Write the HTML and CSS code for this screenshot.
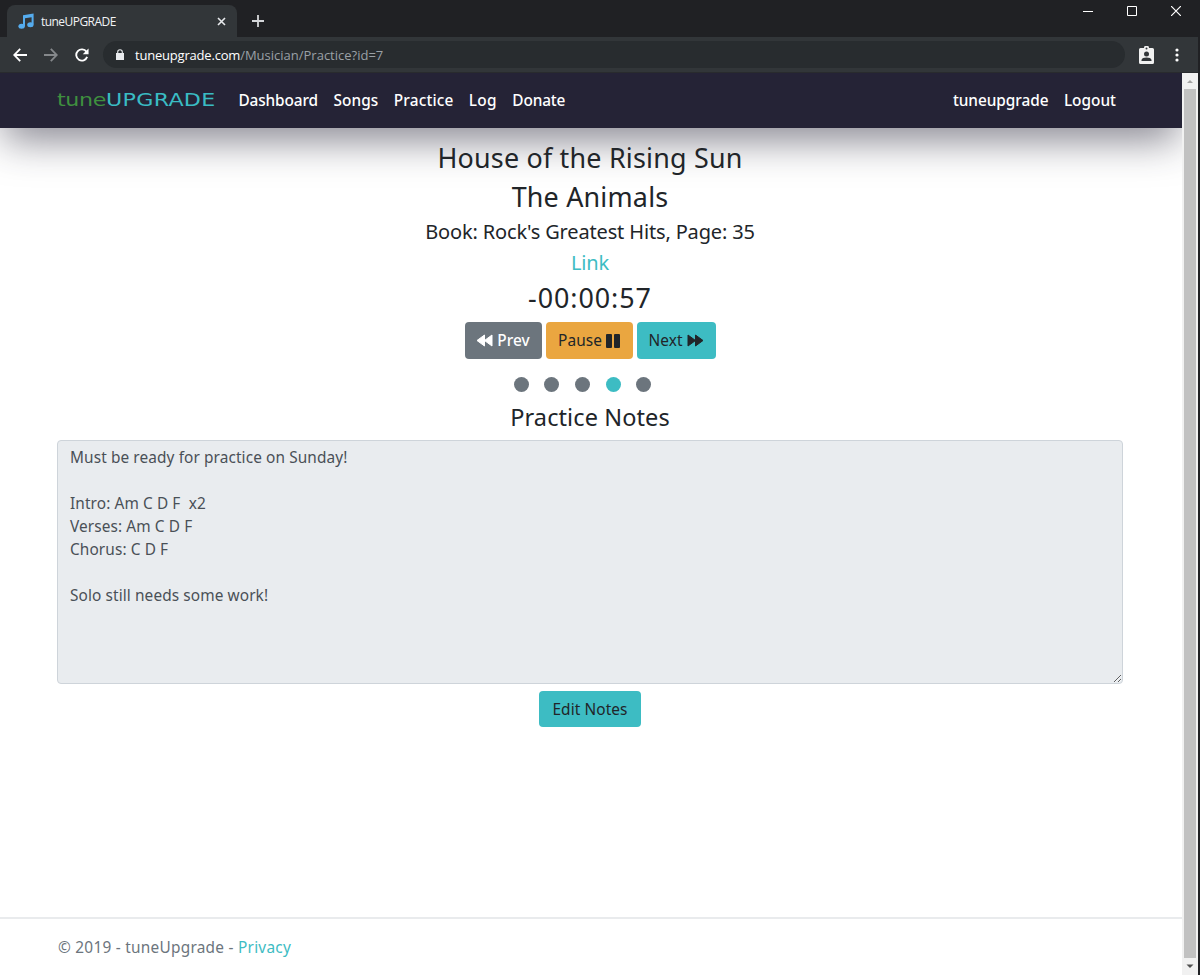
FILE: index.html
```html
<!DOCTYPE html>
<html lang="en">
<head>
  <meta charset="UTF-8">
  <title>tuneUPGRADE</title>
  <link rel="stylesheet" href="styles.css">
</head>
<body>
  <div class="tabstrip">
    <div class="tab">
      <svg class="tab-icon" width="16" height="16" viewBox="0 0 16 16" fill="#55acee"><path d="M5 2.2 15.6.4v11.2h-2V4.2L7 5.3v7.9H5z"/><ellipse cx="3.6" cy="13.2" rx="3.2" ry="2.5"/><ellipse cx="12.4" cy="11.8" rx="3.2" ry="2.5"/></svg>
      <span class="tab-title">tuneUPGRADE</span>
      <svg class="tab-close" width="9" height="9" viewBox="0 0 9 9" stroke="#e8eaed" stroke-width="1.6"><path d="M1 1l7 7M8 1l-7 7"/></svg>
    </div>
    <svg class="new-tab" width="12" height="12" viewBox="0 0 12 12" stroke="#d5d7da" stroke-width="1.8"><path d="M6 0v12M0 6h12"/></svg>
    <div class="window-buttons">
      <svg width="10" height="10" viewBox="0 0 10 10" stroke="#fff"><path d="M0 5.5h10"/></svg>
      <svg width="10" height="10" viewBox="0 0 10 10" stroke="#fff" fill="none"><path d="M.5.5h9v9h-9z"/></svg>
      <svg width="10" height="10" viewBox="0 0 10 10" stroke="#fff" stroke-width="1.2"><path d="M0 0l10 10M10 0L0 10"/></svg>
    </div>
  </div>
  <div class="toolbar">
    <svg width="14" height="14" viewBox="0 0 14 14" fill="none" stroke="#fff" stroke-width="1.8"><path d="M14 7H1.5M7.2.8 1.2 7l6 6.2"/></svg>
    <svg width="14" height="14" viewBox="0 0 14 14" fill="none" stroke="#85888b" stroke-width="1.8"><path d="M0 7h12.5M6.8.8l6 6.2-6 6.2"/></svg>
    <svg width="14" height="14" viewBox="0 0 15 14"><path d="M12.3 3.6A6 6 0 1 0 13 9" fill="none" stroke="#fff" stroke-width="2"/><path d="M14.5 0v6.2H8.3z" fill="#fff"/></svg>
    <div class="address">
      <svg width="8" height="11" viewBox="0 0 8 11"><path d="M0 4h8v7H0z" fill="#e8eaed"/><path d="M1.7 4.5V3a2.3 2.3 0 0 1 4.6 0v1.5" fill="none" stroke="#e8eaed" stroke-width="1.1"/></svg>
      <span class="url"><span class="url-host">tuneupgrade.com</span><span class="url-path">/Musician/Practice?id=7</span></span>
    </div>
    <svg class="profile" width="15" height="18" viewBox="0 0 15 18"><path d="M1.5 2H5a2.5 2.5 0 0 1 5 0h3.5q1.5 0 1.5 1.5v13q0 1.5-1.5 1.5h-12Q0 18 0 16.500v-13Q0 2 1.500 2z" fill="#f1f1f1"/><circle cx="7.5" cy="2.5" r="1" fill="#323639"/><circle cx="7.5" cy="8" r="2.5" fill="#323639"/><path d="M2.5 15v-1c0-3.300 10-3.300 10 0v1z" fill="#323639"/></svg>
    <svg class="menu" width="4" height="14" viewBox="0 0 4 14" fill="#fff"><circle cx="2" cy="2" r="1.6"/><circle cx="2" cy="7" r="1.6"/><circle cx="2" cy="12" r="1.6"/></svg>
  </div>

  <div class="window">
    <div class="page">
      <nav class="navbar">
        <a class="brand"><span class="brand-tune">tune</span><span class="brand-upgrade">UPGRADE</span></a>
        <a class="nav-link dashboard">Dashboard</a>
        <a class="nav-link songs">Songs</a>
        <a class="nav-link practice">Practice</a>
        <a class="nav-link log">Log</a>
        <a class="nav-link donate">Donate</a>
        <a class="nav-link user">tuneupgrade</a>
        <a class="nav-link logout">Logout</a>
      </nav>

      <main>
        <h2>House of the Rising Sun</h2>
        <h2>The Animals</h2>
        <h4>Book: Rock's Greatest Hits, Page: 35</h4>
        <h4><a>Link</a></h4>
        <h2 class="timer">-00:00:57</h2>
        <div class="controls">
          <button class="btn btn-prev"><svg width="17" height="13" viewBox="0 0 17 13" fill="#fff" stroke="#fff" stroke-linejoin="round"><path d="M8.500 1v11L1 6.500zM16 1v11L8.500 6.500z"/></svg><span>Prev</span></button>
          <button class="btn btn-pause"><span>Pause</span><svg width="14" height="14" viewBox="0 0 14 14" fill="#212529"><rect width="6" height="14" rx="1"/><rect x="8" width="6" height="14" rx="1"/></svg></button>
          <button class="btn btn-next"><span>Next</span><svg width="17" height="13" viewBox="0 0 17 13" fill="#212529" stroke="#212529" stroke-linejoin="round"><path d="M1 1v11l7.500-5.500zM8.500 1v11L16 6.500z"/></svg></button>
        </div>
        <div class="dots"><i></i><i></i><i></i><i class="active"></i><i></i></div>
        <h3>Practice Notes</h3>
        <textarea class="notes" readonly>Must be ready for practice on Sunday!

Intro: Am C D F  x2
Verses: Am C D F
Chorus: C D F

Solo still needs some work!</textarea>
        <button class="btn btn-edit">Edit Notes</button>
      </main>
      <footer>© 2019 - tuneUpgrade - <a>Privacy</a></footer>
    </div>
    <div class="scrollbar">
      <svg width="16" height="16" viewBox="0 0 16 16"><path d="M5 10h6L8 7z" fill="#a3a3a3"/></svg>
      <div class="thumb"></div>
      <svg width="16" height="17" viewBox="0 0 16 17"><path d="M4.5 6.5h7L8 10z" fill="#505050"/></svg>
    </div>
  </div>
</body>
</html>
```
FILE: styles.css
```css
* {
  box-sizing: border-box;
}
body {
  margin: 0;
  height: 975px;
  overflow: hidden;
  display: flex;
  flex-direction: column;
  background: #202124;
  color: #212529;
  font-family: "Noto Sans", sans-serif;
  font-size: 15.4px;
}
svg {
  flex: none;
  display: block;
}

/* browser window */
.tabstrip {
  height: 37px;
  display: flex;
  padding-left: 7px;
}
.tab {
  width: 230px;
  height: 32px;
  margin-top: 5px;
  padding: 0 11px;
  display: flex;
  align-items: center;
  background: #323639;
  border-radius: 8px 8px 0 0;
  color: #f1f3f4;
  font-family: "Open Sans", sans-serif;
  font-size: 12px;
  letter-spacing: -0.55px;
}
.tab-title {
  margin-left: 7px;
}
.tab-close {
  margin-left: auto;
}
.new-tab {
  margin: 15px 0 0 15px;
}
.window-buttons {
  display: flex;
  gap: 34px;
  margin: 6px 19px 0 auto;
}
.toolbar {
  height: 36px;
  width: 1198px;
  display: flex;
  align-items: center;
  gap: 17px;
  padding-left: 13px;
  background: #323639;
  border-bottom: 1px solid #292b2e;
}
.address {
  width: 1022px;
  height: 27px;
  margin-left: -3px;
  padding-left: 13px;
  display: flex;
  align-items: center;
  background: #282c2f;
  border-radius: 14px;
  font-family: "Open Sans", sans-serif;
  font-size: 13px;
  color: #fff;
}
.url {
  margin-left: 11px;
}
.url-host {
  letter-spacing: -0.2px;
}
.url-path {
  color: #9aa0a6;
}
.profile {
  margin-left: -3px;
}
.menu {
  margin-left: 4px;
}

/* page */
.window {
  flex: 1;
  width: 1198px;
  display: flex;
}
.page {
  width: 1182px;
  height: 902px;
  overflow: hidden;
  display: flex;
  flex-direction: column;
  background: #fff;
}
.navbar {
  height: 55px;
  flex: none;
  padding: 0 66px 0 57px;
  display: flex;
  align-items: center;
  gap: 15.4px;
  background: #252336;
  box-shadow: 0 15px 40px -4px rgba(37, 35, 54, 0.58);
}
.brand {
  width: 166px;
  font-family: "DejaVu Sans", sans-serif;
  font-size: 18.5px;
  position: relative;
  top: -1px;
  transform: scaleX(1.2);
  transform-origin: left;
}
.brand-tune {
  color: #3f8f3f;
  letter-spacing: -0.3px;
}
.brand-upgrade {
  color: #3abcc4;
  letter-spacing: 0.2px;
}
.nav-link {
  color: #fff;
  font-weight: 500;
}
.dashboard {
  letter-spacing: -0.12px;
}
.songs {
  letter-spacing: 0.1px;
}
.practice {
  letter-spacing: 0.15px;
}
.log {
  letter-spacing: 0.3px;
}
.donate {
  letter-spacing: -0.15px;
}
.user {
  margin-left: auto;
  letter-spacing: -0.05px;
}
main {
  padding: 10px 59px 0 57px;
  display: flex;
  flex-direction: column;
  align-items: center;
}
h2, h3, h4 {
  margin: 0;
  font-weight: 400;
}
h2 {
  height: 39px;
  line-height: 39px;
  font-size: 26.9px;
  letter-spacing: 0.2px;
}
.timer {
  letter-spacing: 0.95px;
}
h4 {
  height: 31px;
  line-height: 31px;
  font-size: 20px;
  letter-spacing: -0.15px;
}
h3 {
  height: 43px;
  line-height: 40px;
  font-size: 23.5px;
  letter-spacing: 0.1px;
}
a {
  color: #3dbcc3;
}
.controls {
  display: flex;
  gap: 4px;
  margin-top: 5px;
}
.btn {
  height: 37px;
  border: 0;
  border-radius: 4px;
  padding: 0;
  display: flex;
  align-items: center;
  justify-content: center;
  gap: 4px;
  background: #3dbcc3;
  color: #212529;
  font-family: inherit;
  font-size: 15.4px;
  letter-spacing: 0.1px;
}
.btn-prev {
  width: 77px;
  background: #6c757d;
  color: #fff;
  font-weight: 500;
}
.btn-pause {
  width: 87px;
  background: #eaa640;
}
.btn-next {
  width: 79px;
}
.dots {
  display: flex;
  gap: 15.7px;
  margin: 18px 15px 5px 0;
}
.dots i {
  width: 15px;
  height: 15px;
  border-radius: 50%;
  background: #6c757d;
}
.dots .active {
  background: #3dbcc3;
}
.notes {
  width: 1066px;
  height: 244px;
  padding: 5px 12px;
  background: #e9ecef;
  border: 1px solid #ced4da;
  border-radius: 4px;
  color: #495057;
  font-family: inherit;
  font-size: 15.4px;
  letter-spacing: 0.1px;
  line-height: 23px;
  outline: 0;
}
.btn-edit {
  width: 102px;
  height: 36px;
  margin-top: 7px;
}
footer {
  height: 58px;
  margin-top: auto;
  padding-left: 58px;
  border-top: 2px solid #e9ebed;
  line-height: 57px;
  color: #6c757d;
  letter-spacing: 0.25px;
}

.scrollbar {
  width: 16px;
  display: flex;
  flex-direction: column;
  background: #f1f1f1;
}
.thumb {
  flex: 1;
  width: 12px;
  margin-left: 2px;
  background: #c1c1c1;
}
```
